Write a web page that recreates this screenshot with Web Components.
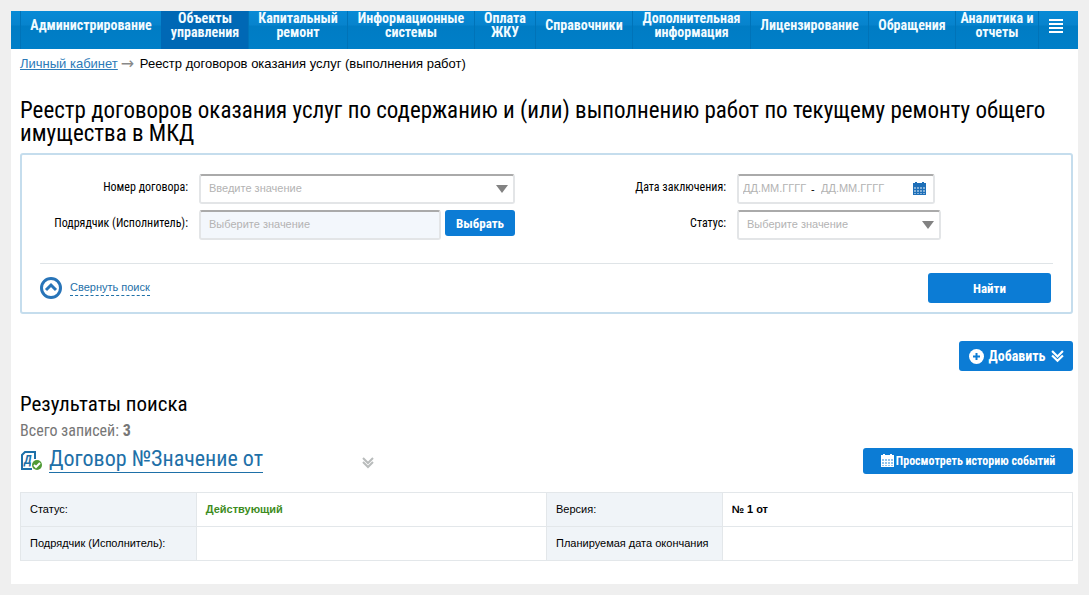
<!DOCTYPE html>
<html lang="ru">
<head>
<meta charset="utf-8">
<title>Реестр договоров</title>
<style>
:root{--blue:#0c7cd5;--link:#1e70a8;--cond:"Roboto Condensed","Liberation Sans Narrow","Liberation Sans",sans-serif;--sans:"Liberation Sans",Arial,sans-serif}
body{margin:0;background:#efefef;color:#000;font-family:var(--sans);font-size:12px}
</style>
</head>
<body>
<registry-page></registry-page>
<script>
const define = (name, html) => customElements.define(name, class extends HTMLElement {
  connectedCallback() {
    if (this.shadowRoot) return;
    const t = document.createElement('template');
    t.innerHTML = typeof html === 'function' ? html(this) : html;
    this.attachShadow({mode: 'open'}).append(t.content.cloneNode(true));
  }
});

define('nav-item', el => `
<style>
:host{display:block;min-width:0;border-left:1px solid #0073b8}
:host([active]){background:#0068b5;border-color:#0068b5}
a{box-sizing:border-box;height:100%;padding-bottom:10px;display:flex;align-items:center;justify-content:center;text-align:center;white-space:nowrap;font:bold 14px/14px var(--cond);color:#f2fbff;text-decoration:none}
</style><a href="#"${el.getAttribute('label') ? ` aria-label="${el.getAttribute('label')}"` : ''}><span><slot></slot></span></a>`);

define('main-nav', `
<style>
:host{display:block;background:linear-gradient(#078ad6 0,#0783cd 14px,#007cc4 15px,#007fc8)}
nav{height:38px;padding:0 5px 0 9px;display:grid;grid-template-columns:141fr 87fr 99fr 127fr 61fr 97fr 118fr 118fr 87fr 83fr 35fr}
svg{display:block}
</style>
<nav>
<nav-item>Администрирование</nav-item>
<nav-item active>Объекты<br>управления</nav-item>
<nav-item>Капитальный<br>ремонт</nav-item>
<nav-item>Информационные<br>системы</nav-item>
<nav-item>Оплата<br>ЖКУ</nav-item>
<nav-item>Справочники</nav-item>
<nav-item>Дополнительная<br>информация</nav-item>
<nav-item>Лицензирование</nav-item>
<nav-item>Обращения</nav-item>
<nav-item>Аналитика и<br>отчеты</nav-item>
<nav-item label="Меню"><svg width="14" height="16"><path d="M0 3h14M0 7h14M0 11h14M0 15h14" stroke="#fff" stroke-width="2"/></svg></nav-item>
</nav>`);

define('ui-button', `
<style>
:host{display:block}
button{box-sizing:border-box;width:100%;height:100%;border:0;border-radius:3px;padding:0;margin:0;background:var(--blue);color:#fff;font-family:var(--cond);font-weight:bold;font-size:inherit;display:flex;align-items:center;justify-content:center;gap:inherit;white-space:nowrap}
</style><button type="button"><slot></slot></button>`);

const calendar = color => `<svg width="13" height="14" viewBox="0 0 13 14" style="display:block"><path fill="${color}" d="M0 1h2V0h2v1h5V0h2v1h2v3H0z"/><path fill="${color}" fill-opacity=".55" d="M0 4h13v9H0z"/><path stroke="${color}" d="M0 4.500h13M0 7.500h13M0 10.500h13M0 12.500h13M.5 4v9M3.500 4v9M6.500 4v9M9.500 4v9M12.500 4v9"/></svg>`;
const boxStyle = `
.box{box-sizing:border-box;height:30px;border:2px solid #e3e5e7;border-top-color:#aaa;border-radius:3px;background:#fff;display:flex;align-items:center;overflow:hidden}
input,select{appearance:none;border:0;outline:0;background:none;margin:0;padding:0 0 2px;box-sizing:border-box;min-width:0;flex:1;height:26px;font:11px var(--sans);color:#b3b3b3}
input::placeholder{color:#b3b3b3;opacity:1}`;
const fieldStyle = `
:host{display:grid;grid-template-columns:1fr 316px;gap:11px;height:30px}
label{justify-self:end;font:12px/26px var(--cond);color:#000;white-space:nowrap}
.row{display:flex;align-items:start;gap:4px}`;
const arrow = `<svg width="12" height="8" style="display:block;flex:none"><path d="M0 0h12l-6 8z" fill="#828282"/></svg>`;

define('combo-field', `
<style>${fieldStyle}${boxStyle}
.box{flex:1;padding:0 5px 0 8px}
button{border:0;background:none;padding:0}
</style>
<label for="c">Номер договора:</label>
<div class="row"><div class="box"><input id="c" type="text" placeholder="Введите значение"><button type="button" aria-label="Открыть список">${arrow}</button></div></div>`);

define('lookup-field', `
<style>${fieldStyle}${boxStyle}
.box{flex:1;padding-left:8px;background:#f3f7fc}
ui-button{width:70px;height:26px;font-size:13px}
</style>
<label for="c">Подрядчик (Исполнитель):</label>
<div class="row"><div class="box"><input id="c" type="text" placeholder="Выберите значение" readonly></div><ui-button>Выбрать</ui-button></div>`);

define('period-field', `
<style>${fieldStyle}${boxStyle}
.box{width:198px;padding:0 7px 0 4px}
.box input{flex:none;width:68px}
.box input:focus{color:#000}
span{width:10px;font-size:11px}
button{border:0;background:none;padding:0;margin-left:auto}
</style>
<label for="c">Дата заключения:</label>
<div class="row"><div class="box"><input id="c" type="text" placeholder="ДД.ММ.ГГГГ"><span>-</span><input type="text" placeholder="ДД.ММ.ГГГГ" aria-label="Дата заключения, по"><button type="button" aria-label="Календарь">${calendar('#1e6fb8')}</button></div></div>`);

define('status-field', `
<style>${fieldStyle}${boxStyle}
.box{width:204px;display:grid;grid-template-columns:1fr 12px;padding:0 5px 0 8px}
select{grid-area:1/1/2/3;width:100%}
svg{grid-area:1/2;pointer-events:none}
</style>
<label for="c">Статус:</label>
<div class="row"><div class="box"><select id="c"><option>Выберите значение</option></select>${arrow}</div></div>`);

define('search-panel', `
<style>
:host{display:block;border:2px solid #c5dded;border-radius:3px;padding:19px 18px 9px}
.fields{display:grid;grid-template-columns:475fr 538fr;row-gap:6px;padding-bottom:23px;border-bottom:1px solid #dfe4e7}
.foot{display:flex;align-items:center;justify-content:space-between;padding:9px 2px 0 0}
.toggle{display:flex;align-items:center;gap:8px;color:var(--link);font-size:11px;line-height:15px;text-decoration:none}
.toggle span{border-bottom:1px dashed}
ui-button{width:123px;height:30px;font-size:13px}
</style>
<form>
<div class="fields"><combo-field></combo-field><period-field></period-field><lookup-field></lookup-field><status-field></status-field></div>
<div class="foot"><a class="toggle" href="#"><svg width="22" height="22"><circle cx="11" cy="11" r="9.500" fill="none" stroke="#2874b8" stroke-width="3"/><path d="M6 13l5-5 5 5" fill="none" stroke="#2874b8" stroke-width="3"/></svg><span>Свернуть поиск</span></a>
<ui-button>Найти</ui-button></div>
</form>`);

const chevrons = (color, size) => `<svg width="${size}" height="${size}" viewBox="0 0 12 12" style="display:block"><path d="M1 1l5 5 5-5M1 5l5 5 5-5" fill="none" stroke="${color}" stroke-width="2"/></svg>`;

define('contract-card', `
<style>
:host{display:block}
header{display:flex;align-items:center;height:30px}
.doc{flex:none;margin-right:6px}
.name{font:22px/20px var(--cond);color:var(--link);text-decoration:none;border-bottom:1px solid;white-space:nowrap;height:23px}
.more{border:0;padding:0;background:none;margin:4px 0 0 99px}
ui-button{margin-left:auto;width:210px;height:26px;font-size:12px;gap:2px}
table{width:100%;table-layout:fixed;border-collapse:collapse;margin-top:16px;font-size:11px}
th,td{box-sizing:border-box;height:34px;padding:0 9px 2px;border:1px solid #e3e7ea;text-align:left;white-space:nowrap;width:33.3%}
th{background:#f0f4f8;font-weight:normal;width:16.7%}
td{font-weight:bold}
.ok{color:#3d8c22}
</style>
<header>
<svg class="doc" width="23" height="22" viewBox="0 0 23 22"><path d="M15 9V2H5L2 5v14h10" fill="none" stroke="#1e70a8" stroke-width="2"/><text x="4" y="14" font-family="Roboto Condensed" font-size="12" font-weight="bold" font-style="italic" fill="#1e70a8">Д</text><circle cx="17" cy="15" r="6" fill="#fff"/><circle cx="17" cy="15" r="5" fill="#4f9a35"/><path d="M14 15l2 2 4-4" fill="none" stroke="#fff" stroke-width="2"/></svg>
<a class="name" href="#">Договор №Значение от</a>
<button class="more" type="button" aria-label="Подробнее">${chevrons('#b9bcbc', 12)}</button>
<ui-button>${calendar('#fff')}<span>Просмотреть историю событий</span></ui-button>
</header>
<table>
<tr><th scope="row">Статус:</th><td class="ok">Действующий</td><th scope="row">Версия:</th><td>№ 1 от</td></tr>
<tr><th scope="row">Подрядчик (Исполнитель):</th><td></td><th scope="row">Планируемая дата окончания</th><td></td></tr>
</table>`);

define('registry-page', `
<style>
:host{display:block;margin:11px;background:#fff}
main{padding:7px 5px 23px 9px}
.crumbs{font-size:13px;line-height:15px;display:flex;gap:3px}
.crumbs a{color:#2c7ab8}
.crumbs i{font:16px/15px "DejaVu Sans",sans-serif;color:#888;width:16px}
h1,h2{font:23px/23px var(--cond);margin:0}
h1{margin:28px 0 8px}
h2{font-size:21px}
.actions{display:flex;justify-content:flex-end;margin:27px 0 22px}
.actions ui-button{width:114px;height:30px;font-size:14px;gap:5px}
.total{font:16px/20px var(--cond);color:#777;margin:5px 0}
</style>
<main-nav></main-nav>
<main>
<div class="crumbs"><a href="#">Личный кабинет</a><i>→</i><span>Реестр договоров оказания услуг (выполнения работ)</span></div>
<h1>Реестр договоров оказания услуг по содержанию и (или) выполнению работ по текущему ремонту общего имущества в МКД</h1>
<search-panel></search-panel>
<div class="actions"><ui-button><svg width="15" height="15"><circle cx="7.500" cy="7.500" r="7.500" fill="#fff"/><path d="M7.500 4v7M4 7.500h7" stroke="#0c7cd5" stroke-width="2"/></svg><span>Добавить</span>${chevrons('#fff', 13)}</ui-button></div>
<h2>Результаты поиска</h2>
<p class="total">Всего записей: <b>3</b></p>
<contract-card></contract-card>
</main>`);
</script>
</body>
</html>
